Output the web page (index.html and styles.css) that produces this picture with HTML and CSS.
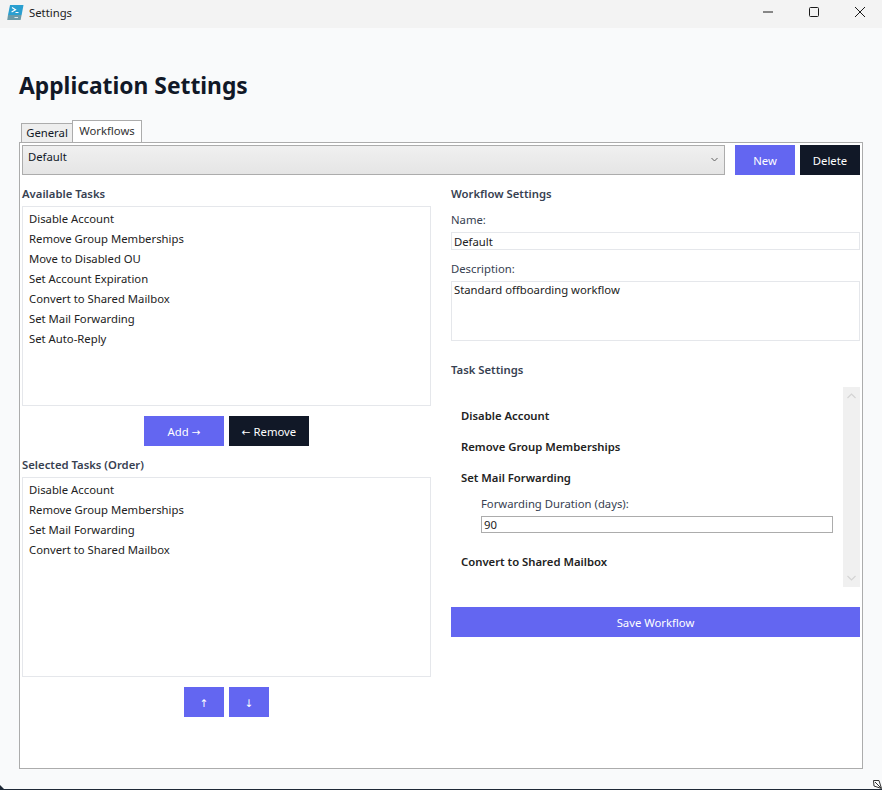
FILE: index.html

```html
<!DOCTYPE html>
<html lang="en">
<head>
    <meta charset="UTF-8">
    <title>Settings</title>
    <link rel="stylesheet" href="styles.css">
</head>
<body>

<div class="titlebar">
    <svg class="app-icon" width="17" height="15" viewBox="0 0 17 15">
        <path d="M3 0H16.5L14.6 10H1Z" fill="#2a9fd0"/>
        <path d="M1 10H14.6L13.6 15H0.2Z" fill="#6a9aa8"/>
        <path d="M5 2.5L8.5 4.7L4.6 7.1" fill="none" stroke="#fff" stroke-width="1.2"/>
        <path d="M8.5 7.5H11.5" stroke="#fff" stroke-width="1"/>
        <path d="M7.5 12.5H11" stroke="#dfe8ec" stroke-width="1"/>
    </svg>
    <span class="window-title">Settings</span>
    <div class="window-buttons">
        <svg width="10" height="10" viewBox="0 0 10 10"><path d="M0 5H10" stroke="#1a1a1a"/></svg>
        <svg width="10" height="10" viewBox="0 0 10 10"><rect x="0.5" y="0.5" width="9" height="9" rx="1" fill="none" stroke="#1a1a1a"/></svg>
        <svg width="10" height="10" viewBox="0 0 10 10"><path d="M0 0L10 10M10 0L0 10" stroke="#1a1a1a"/></svg>
    </div>
</div>

<div class="content">
    <h1>Application Settings</h1>

    <div class="tabs">
        <div class="tab">General</div>
        <div class="tab active">Workflows</div>
    </div>

    <div class="panel">
        <div class="workflow-bar">
            <div class="combo">
                <span>Default</span>
                <svg width="7" height="5" viewBox="0 0 7 5"><path d="M0.5 1L3.5 4L6.5 1" fill="none" stroke="#606060"/></svg>
            </div>
            <button class="btn primary new-btn">New</button>
            <button class="btn dark">Delete</button>
        </div>

        <div class="columns">
            <div class="left-col">
                <div class="section-label">Available Tasks</div>
                <ul class="task-list">
                    <li>Disable Account</li>
                    <li>Remove Group Memberships</li>
                    <li>Move to Disabled OU</li>
                    <li>Set Account Expiration</li>
                    <li>Convert to Shared Mailbox</li>
                    <li>Set Mail Forwarding</li>
                    <li>Set Auto-Reply</li>
                </ul>
                <div class="btn-row add-row">
                    <button class="btn primary wide">Add <span class="arrow">→</span></button>
                    <button class="btn dark wide"><span class="arrow">←</span> Remove</button>
                </div>
                <div class="section-label">Selected Tasks (Order)</div>
                <ul class="task-list">
                    <li>Disable Account</li>
                    <li>Remove Group Memberships</li>
                    <li>Set Mail Forwarding</li>
                    <li>Convert to Shared Mailbox</li>
                </ul>
                <div class="btn-row">
                    <button class="btn primary small"><span class="arrow">↑</span></button>
                    <button class="btn primary small"><span class="arrow">↓</span></button>
                </div>
            </div>

            <div class="right-col">
                <div class="section-label">Workflow Settings</div>
                <div class="field-label">Name:</div>
                <div class="input">Default</div>
                <div class="field-label desc-label">Description:</div>
                <div class="input textarea">Standard offboarding workflow</div>
                <div class="section-label task-settings">Task Settings</div>

                <div class="scroll-area">
                    <div class="scroll-content">
                        <div class="task-name">Disable Account</div>
                        <div class="task-name">Remove Group Memberships</div>
                        <div class="task-name">Set Mail Forwarding</div>
                        <div class="task-option">
                            <div class="option-label">Forwarding Duration (days):</div>
                            <div class="option-input">90</div>
                        </div>
                        <div class="task-name">Convert to Shared Mailbox</div>
                    </div>
                    <div class="scrollbar">
                        <svg width="9" height="6" viewBox="0 0 9 6"><path d="M0.5 5L4.5 1L8.5 5" fill="none" stroke="#d4d4d4" stroke-width="1.2"/></svg>
                        <svg width="9" height="6" viewBox="0 0 9 6"><path d="M0.5 1L4.5 5L8.5 1" fill="none" stroke="#d4d4d4" stroke-width="1.2"/></svg>
                    </div>
                </div>

                <button class="btn primary save">Save Workflow</button>
            </div>
        </div>
    </div>
</div>

<svg class="corner" width="4" height="4" viewBox="0 0 4 4"><path d="M0 0L4 4H0Z" fill="#1f2937"/></svg>
<svg class="grip" width="9" height="9" viewBox="0 0 9 9"><path d="M0.5 0.5H6L8.5 8.5L1 6Z M2 2L8 8" fill="#fff" stroke="#333" stroke-width="1"/></svg>

</body>
</html>
```

FILE: styles.css

```css
html, body {
    height: 100%;
}
body {
    margin: 0;
    height: 790px;
    overflow: hidden;
    font-family: "Noto Sans", "Open Sans", sans-serif;
    font-size: 11.3px;
    color: #111827;
    background-color: #f9fafb;
    border-bottom: 1px solid #1f2937;
    box-sizing: border-box;
}
.titlebar {
    height: 28px;
    display: flex;
    align-items: center;
    background-color: #f3f3f3;
    padding-left: 7px;
}
.app-icon {
    margin-right: 5px;
    margin-top: -3px;
}
.window-title {
    color: #222;
    margin-top: -3px;
}
.window-buttons {
    margin-left: auto;
    display: flex;
    gap: 36px;
    padding-right: 17px;
    margin-top: -4px;
}
.content {
    padding: 0 19px;
}
h1 {
    margin: 0;
    padding-top: 41px;
    height: 33px;
    line-height: 33px;
    font-size: 22.8px;
    font-weight: 700;
    color: #111827;
    box-sizing: content-box;
}
.tabs {
    display: flex;
    align-items: flex-end;
    height: 22px;
    margin-top: 18px;
    padding-left: 2px;
}
.tab {
    height: 19px;
    width: 52px;
    box-sizing: border-box;
    border: 1px solid #acacac;
    border-bottom: none;
    background-color: #eeeeee;
    text-align: center;
    line-height: 18px;
}
.tab.active {
    height: 22px;
    width: 70px;
    margin-left: -1px;
    background-color: #fff;
    line-height: 20px;
    color: #333;
}
.panel {
    width: 844px;
    height: 627px;
    box-sizing: border-box;
    border: 1px solid #acacac;
    background-color: #fff;
    padding: 2px;
}
.workflow-bar {
    display: flex;
    height: 30px;
}
.combo {
    width: 703px;
    box-sizing: border-box;
    border: 1px solid #acacac;
    background: linear-gradient(#f0f0f0, #e5e5e5);
    display: flex;
    justify-content: space-between;
    padding: 3px 6px 0 5px;
}
.combo svg {
    margin-top: 8px;
}
.btn {
    height: 30px;
    border: none;
    padding: 0;
    font-family: inherit;
    font-size: 11.3px;
    color: #fff;
}
.arrow {
    font-family: "DejaVu Sans", sans-serif;
    font-size: 10.5px;
}
.primary {
    background-color: #6366f1;
}
.dark {
    background-color: #111827;
}
.workflow-bar .btn {
    width: 60px;
    margin-left: 5px;
}
.workflow-bar .new-btn {
    margin-left: 10px;
}
.columns {
    display: flex;
    margin-top: 11px;
    gap: 20px;
}
.left-col, .right-col {
    width: 409px;
}
.section-label {
    font-weight: 600;
    color: #374151;
    height: 17px;
    line-height: 15px;
    margin-bottom: 3px;
}
.task-list {
    list-style: none;
    margin: 0;
    padding: 2px 6px;
    height: 200px;
    box-sizing: border-box;
    border: 1px solid #e5e7eb;
    color: #222;
}
.task-list li {
    height: 20px;
    line-height: 20px;
}
.btn-row {
    display: flex;
    justify-content: center;
    gap: 5px;
    margin: 10px 0;
}
.add-row {
    margin-bottom: 11px;
}
.wide {
    width: 80px;
}
.small {
    width: 40px;
}
.field-label {
    height: 17px;
    line-height: 15px;
    margin-top: 9px;
    margin-bottom: 3px;
    color: #374151;
}
.desc-label {
    margin-top: 11px;
}
.input {
    height: 18px;
    line-height: 17px;
    box-sizing: border-box;
    border: 1px solid #e5e7eb;
    padding-left: 2px;
    color: #222;
}
.textarea {
    height: 60px;
    line-height: 15px;
}
.task-settings {
    margin-top: 20px;
    margin-bottom: 9px;
    line-height: 17px;
}
.scroll-area {
    display: flex;
    height: 200px;
}
.scroll-content {
    flex: 1;
    padding: 19px 10px 0;
}
.task-name {
    font-weight: 600;
    color: #222;
    height: 20px;
    line-height: 20px;
    margin-bottom: 11px;
}
.task-option {
    padding-left: 20px;
    margin-top: -4px;
    margin-bottom: 19px;
}
.option-label {
    height: 17px;
    line-height: 17px;
    color: #374151;
    margin-bottom: 4px;
}
.option-input {
    height: 17px;
    line-height: 16px;
    box-sizing: border-box;
    border: 1px solid #acacac;
    padding-left: 2px;
    color: #222;
}
.scrollbar {
    width: 17px;
    background-color: #f0f0f0;
    display: flex;
    flex-direction: column;
    justify-content: space-between;
    align-items: center;
    padding: 6px 0;
    box-sizing: border-box;
}
.save {
    width: 100%;
    margin-top: 20px;
}
.corner {
    position: absolute;
    left: 0;
    top: 785px;
}
.grip {
    position: absolute;
    left: 873px;
    top: 780px;
}
```
